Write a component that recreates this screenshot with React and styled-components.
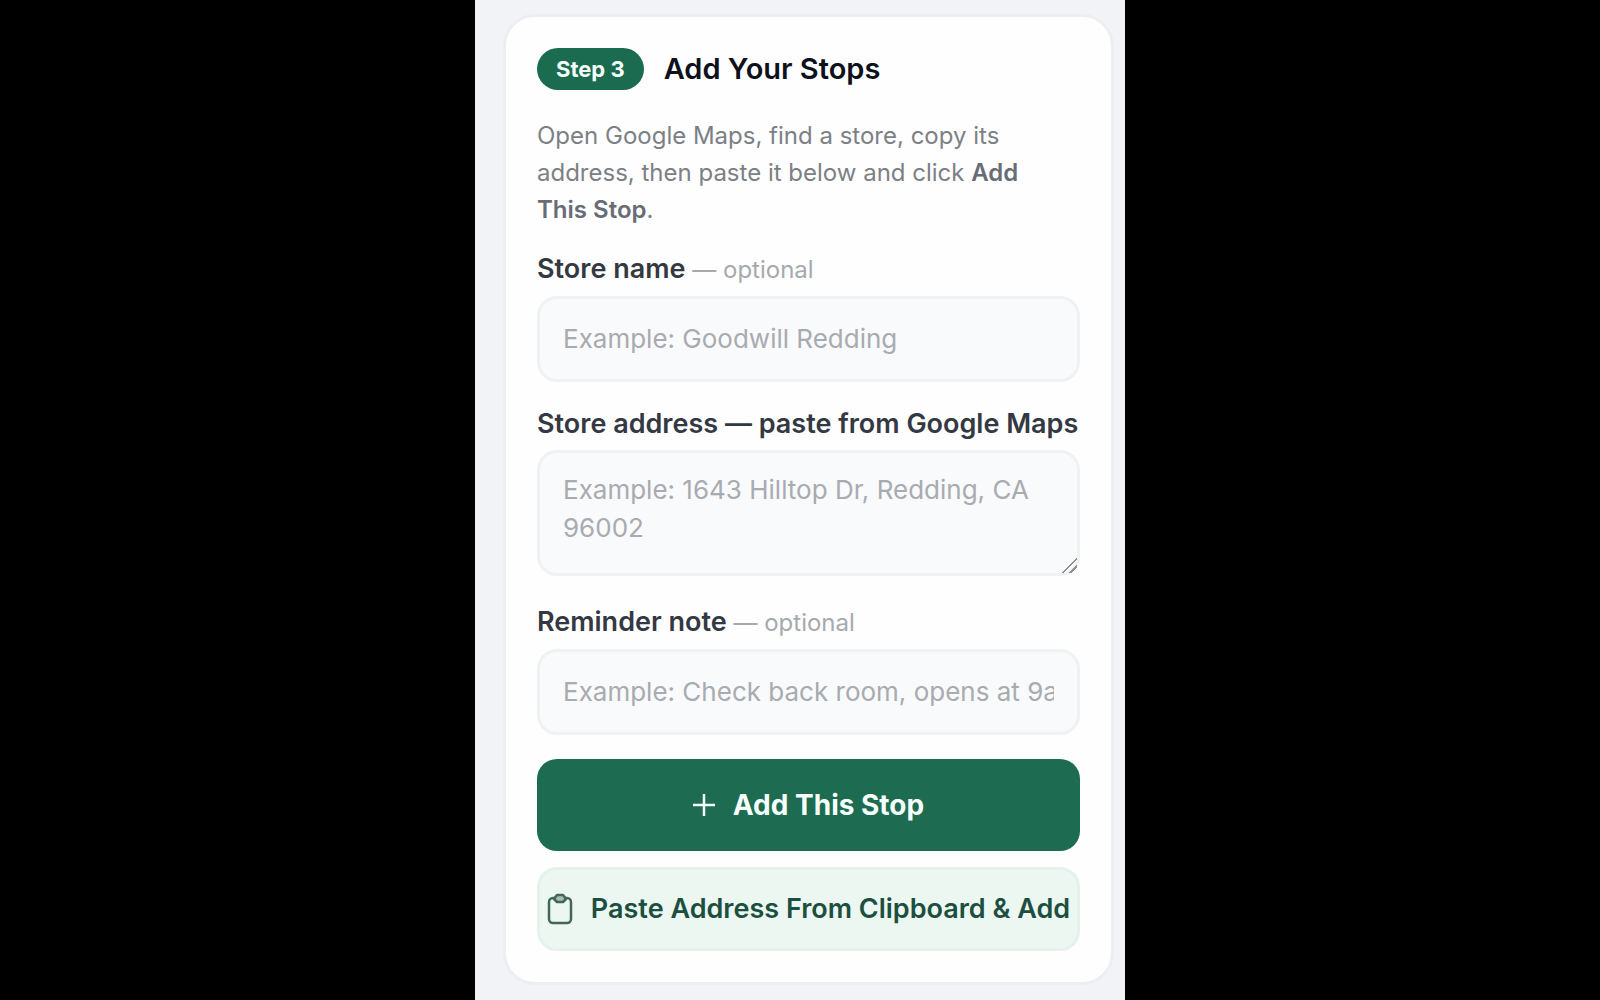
import React from "react";
import styled, { createGlobalStyle } from "styled-components";

const GlobalStyle = createGlobalStyle`
  * {
    box-sizing: border-box;
  }
  body {
    margin: 0;
    background: #000;
    font-family: Inter, "Liberation Sans", sans-serif;
  }
`;

const Screen = styled.main`
  max-width: 650px;
  min-height: 100vh;
  margin: 0 auto;
  padding: 14px 11px 16px 28px;
  background: #f2f3f6;
`;

const Card = styled.form`
  padding: 31px;
  background: #fefefe;
  border: 3px solid #edeef0;
  border-radius: 32px;
`;

const CardHeader = styled.header`
  display: flex;
  align-items: center;
  gap: 20px;
  margin-bottom: 27px;
`;

const Badge = styled.span`
  padding: 6px 19px;
  border-radius: 24px;
  background: #1b6b50;
  color: #f4fffa;
  font-size: 22px;
  font-weight: 700;
  line-height: 30px;
`;

const Title = styled.h2`
  margin: 0;
  color: #0d111c;
  font-size: 29px;
  font-weight: 600;
  line-height: 36px;
`;

const Intro = styled.p`
  margin: 0;
  padding: 0 16px 23px 0;
  color: #7c8085;
  font-size: 24px;
  line-height: 37px;
  strong {
    color: #676c75;
    font-weight: 600;
  }
`;

const Field = styled.div`
  display: flex;
  flex-direction: column;
  gap: 8px;
  margin-bottom: 24px;
`;

const Label = styled.label`
  color: #343843;
  font-size: 27px;
  font-weight: 600;
  line-height: 36px;
  white-space: nowrap;
  span {
    color: #a6a9ae;
    font-size: 24px;
    font-weight: 400;
  }
`;

const Input = styled.input`
  width: 100%;
  padding: 21px 23px;
  border: 3px solid #eff1f3;
  border-radius: 20px;
  background: #f9fafc;
  color: #343843;
  font-family: inherit;
  font-size: 26px;
  line-height: 38px;
  &::placeholder {
    color: #a8abb0;
    opacity: 1;
  }
`;

const TextArea = styled(Input).attrs({ as: "textarea" })`
  display: block;
  resize: vertical;
  height: 126px;
  margin-bottom: 4px;
  padding-top: 18px;
  &::-webkit-scrollbar {
    width: 16px;
    height: 16px;
  }
  &::-webkit-resizer {
    background: linear-gradient(
      135deg,
      transparent 48%,
      #8b8e92 48%,
      #8b8e92 56%,
      transparent 56%,
      transparent 72%,
      #8b8e92 72%,
      #8b8e92 80%,
      transparent 80%
    );
  }
`;

const Button = styled.button`
  display: flex;
  align-items: center;
  justify-content: center;
  width: 100%;
  gap: 18px;
  padding: 28px 6px;
  border: 0;
  border-radius: 20px;
  background: #1d6c52;
  color: #f6fffb;
  font-family: inherit;
  font-size: 28px;
  font-weight: 700;
  line-height: 36px;
  white-space: nowrap;
  svg {
    flex: none;
  }
`;

const PasteButton = styled(Button)`
  margin-top: 16px;
  padding: 21px 4px;
  border: 3px solid #e5f1ec;
  background: #ecf7f2;
  color: #1d4f40;
  font-size: 27px;
  font-weight: 600;
`;

const PlusIcon = () => (
  <svg width="22" height="28" viewBox="0 0 22 28" fill="none" stroke="currentColor" strokeWidth="2.5">
    <path d="M11 3v22M0 14h22" />
  </svg>
);

const ClipboardIcon = () => (
  <svg width="26" height="32" viewBox="0 0 26 32" fill="none" stroke="#43665b" strokeWidth="2.5" strokeLinejoin="round">
    <rect x="2" y="5" width="22" height="25" rx="4" />
    <path d="M7 6l3-4h6l3 4-3 3h-6z" fill="#a9bdb5" />
  </svg>
);

const App = () => (
  <>
    <GlobalStyle />
    <Screen>
      <Card onSubmit={e => e.preventDefault()}>
        <CardHeader>
          <Badge>Step 3</Badge>
          <Title>Add Your Stops</Title>
        </CardHeader>
        <Intro>
          Open Google Maps, find a store, copy its address, then paste it below
          and click <strong>Add This Stop</strong>.
        </Intro>
        <Field>
          <Label htmlFor="store-name">
            Store name <span>— optional</span>
          </Label>
          <Input id="store-name" placeholder="Example: Goodwill Redding" />
        </Field>
        <Field>
          <Label htmlFor="store-address">
            Store address — paste from Google Maps
          </Label>
          <TextArea
            id="store-address"
            placeholder="Example: 1643 Hilltop Dr, Redding, CA 96002"
          />
        </Field>
        <Field>
          <Label htmlFor="note">
            Reminder note <span>— optional</span>
          </Label>
          <Input id="note" placeholder="Example: Check back room, opens at 9am" />
        </Field>
        <Button type="submit">
          <PlusIcon />
          Add This Stop
        </Button>
        <PasteButton type="button">
          <ClipboardIcon />
          Paste Address From Clipboard &amp; Add
        </PasteButton>
      </Card>
    </Screen>
  </>
);

export default App;
